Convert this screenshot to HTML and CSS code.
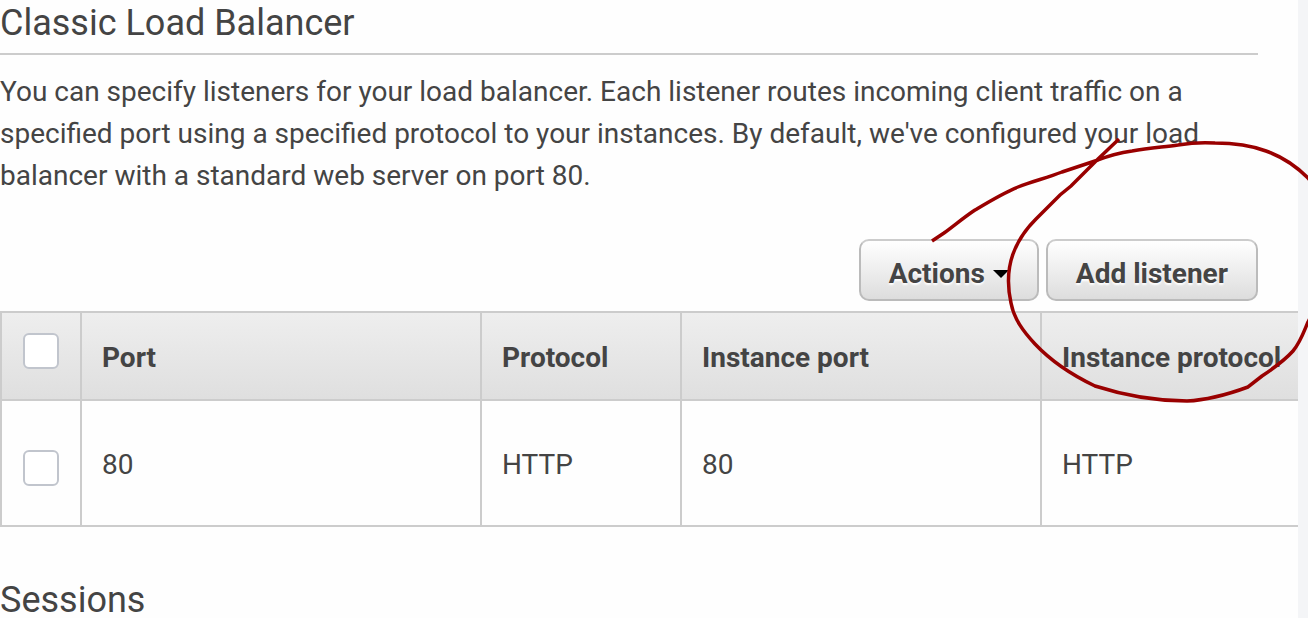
FILE: index.html
```html
<!DOCTYPE html>
<html lang="en">
<head>
<meta charset="utf-8">
<title>Classic Load Balancer</title>
<link rel="stylesheet" href="styles.css">
</head>
<body>
<main class="panel">
  <section class="section">
    <h2 class="section-title">Classic Load Balancer</h2>
    <p class="description">You can specify listeners for your load balancer. Each listener routes incoming client traffic on a specified port using a specified protocol to your instances. By default, we've configured your load balancer with a standard web server on port 80.</p>
    <div class="toolbar">
      <button class="button" type="button">Actions<svg class="caret" viewBox="0 0 16 8" aria-hidden="true"><path d="M0 0H16L8 8Z"/></svg></button>
      <button class="button" type="button">Add listener</button>
    </div>
  </section>
  <table class="listeners">
    <colgroup>
      <col class="col-select"><col class="col-port"><col class="col-protocol"><col class="col-instance-port"><col>
    </colgroup>
    <thead>
      <tr>
        <th class="select"><input class="check" type="checkbox" aria-label="Select all listeners"></th>
        <th scope="col">Port</th>
        <th scope="col">Protocol</th>
        <th scope="col">Instance port</th>
        <th scope="col">Instance protocol</th>
      </tr>
    </thead>
    <tbody>
      <tr>
        <td class="select"><input class="check" type="checkbox" aria-label="Select listener on port 80"></td>
        <td>80</td>
        <td>HTTP</td>
        <td>80</td>
        <td>HTTP</td>
      </tr>
    </tbody>
  </table>
  <h2 class="section-title sessions-title">Sessions</h2>
</main>
<svg class="annotation" width="1308" height="618" viewBox="0 0 1308 618" aria-hidden="true">
  <path d="M932 241L944 233C955 225 963 218 975 210C990 201 1003 193 1018 187C1033 181 1047 178 1062 172L1098 160C1108 156 1118 153 1132 151C1150 148 1164 147 1178 145C1190 143 1202 142 1215 143C1232 143 1250 145 1266 151C1283 157 1297 167 1308 178C1340 215 1334 275 1308 322C1303 334 1300 343 1293 351C1284 361 1274 368 1262 376L1248 387C1229 394 1210 400 1187 401C1157 401 1123 395 1095 386C1074 376 1051 361 1035 344C1023 331 1014 319 1011 303C1007 285 1008 268 1013 254C1018 240 1026 229 1036 219L1060 195L1071 186L1098 159L1119 139"/>
</svg>
</body>
</html>
```
FILE: styles.css
```css
* {
  box-sizing: border-box;
}

body {
  margin: 0;
  min-height: 100vh;
  padding-right: 10px;
  background: #f4f5f7;
  color: #444;
  font: 28px/42px Roboto, "Liberation Sans", sans-serif;
}

.panel {
  min-height: 100vh;
  background: #fefefe;
}

.section {
  padding: 5px 40px 0 0;
}

.section-title {
  margin: 0;
  padding-bottom: 12px;
  border-bottom: 2px solid #ccc;
  font-size: 36px;
  font-weight: 400;
  line-height: 36px;
}

.description {
  margin: 16px 0 42px;
}

.toolbar {
  display: flex;
  justify-content: flex-end;
  gap: 7px;
  margin-bottom: 10px;
}

.button {
  display: flex;
  align-items: center;
  gap: 8px;
  padding: 14px 28px 6px;
  border: 2px solid #bbb;
  border-top-color: #ccc;
  border-radius: 10px;
  background: linear-gradient(#fff, #ddd);
  color: #444;
  font: bold 28px/38px Roboto, "Liberation Sans", sans-serif;
  text-shadow: 0 2px 2px #fff;
}

.caret {
  width: 16px;
  height: 8px;
  fill: #000;
}

.listeners {
  table-layout: fixed;
  width: 100%;
  border: solid #ccc;
  border-width: 2px 0 0 2px;
  border-spacing: 0;
}

.col-select {
  width: 80px;
}

.col-port {
  width: 400px;
}

.col-protocol {
  width: 200px;
}

.col-instance-port {
  width: 360px;
}

.listeners th,
.listeners td {
  padding: 43px 20px 39px;
  border: solid #ccc;
  border-width: 0 2px 2px 0;
  text-align: left;
  white-space: nowrap;
}

.listeners th {
  padding: 24px 20px 20px;
  background: linear-gradient(#eee, #dfdfdf);
  font-weight: 700;
}

.listeners th:last-child,
.listeners td:last-child {
  border-right: 0;
}

.listeners .select {
  padding: 20px 0 0 21px;
  vertical-align: top;
}

.listeners td.select {
  padding-top: 49px;
}

.check {
  display: block;
  appearance: none;
  width: 36px;
  height: 36px;
  margin: 0;
  border: 2px solid #c1c5cd;
  border-radius: 6px;
  background: #fff;
}

.sessions-title {
  margin-top: 55px;
  padding-bottom: 0;
  border-bottom: 0;
}

.annotation {
  position: absolute;
  top: 0;
  left: 0;
  pointer-events: none;
}

.annotation path {
  fill: none;
  stroke: #900;
  stroke-width: 3.5;
}
```
